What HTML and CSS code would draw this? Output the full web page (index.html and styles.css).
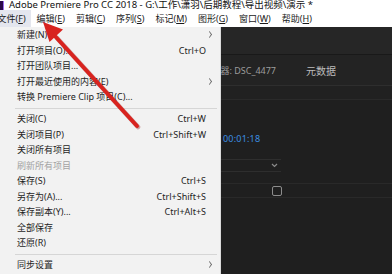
FILE: index.html
```html
<!DOCTYPE html>
<html lang="zh-CN">
<head>
  <meta charset="UTF-8">
  <meta name="viewport" content="width=device-width, initial-scale=1.0">
  <title>Adobe Premiere Pro CC 2018 - 文件菜单</title>
  <link rel="stylesheet" href="styles.css">
</head>
<body>
  <div class="app">
    <!-- Window title -->
    <header class="titlebar">
      <span class="app-icon"></span>
      <span class="title">Adobe Premiere Pro CC 2018 - G:\工作\潇羽\后期教程\导出视频\演示 *</span>
    </header>

    <!-- Menu bar -->
    <nav class="menubar">
      <span class="menu-item active">文件(<u>F</u>)</span>
      <span class="menu-item">编辑(<u>E</u>)</span>
      <span class="menu-item">剪辑(<u>C</u>)</span>
      <span class="menu-item">序列(<u>S</u>)</span>
      <span class="menu-item">标记(<u>M</u>)</span>
      <span class="menu-item">图形(<u>G</u>)</span>
      <span class="menu-item">窗口(<u>W</u>)</span>
      <span class="menu-item">帮助(<u>H</u>)</span>
    </nav>

    <main class="workspace">
      <div class="panel-top"></div>
      <div class="panel-tabs">
        <span class="tab source">源监视器: DSC_4477</span>
        <span class="tab meta">元数据</span>
      </div>
      <div class="panel-strip"></div>
      <div class="panel-body">
        <div class="timecode">00:01:18</div>
        <div class="select-row">
          <div class="select">
            <svg width="7" height="5" viewBox="0 0 7 5"><path d="M1 1l2.5 2.5L6 1" fill="none" stroke="#8a8a8a" stroke-width="1.2"/></svg>
          </div>
        </div>
        <div class="check-row">
          <span class="checkbox"></span>
        </div>
      </div>

      <!-- File menu dropdown -->
      <ul class="dropdown">
        <li class="item"><span>新建(N)</span><span class="sub"></span></li>
        <li class="item"><span>打开项目(O)...</span><span class="key">Ctrl+O</span></li>
        <li class="item"><span>打开团队项目...</span></li>
        <li class="item"><span>打开最近使用的内容(E)</span><span class="sub"></span></li>
        <li class="item"><span>转换 Premiere Clip 项目(C)...</span></li>
        <li class="sep"></li>
        <li class="item"><span>关闭(C)</span><span class="key">Ctrl+W</span></li>
        <li class="item"><span>关闭项目(P)</span><span class="key">Ctrl+Shift+W</span></li>
        <li class="item"><span>关闭所有项目</span></li>
        <li class="item disabled"><span>刷新所有项目</span></li>
        <li class="item"><span>保存(S)</span><span class="key">Ctrl+S</span></li>
        <li class="item"><span>另存为(A)...</span><span class="key">Ctrl+Shift+S</span></li>
        <li class="item"><span>保存副本(Y)...</span><span class="key">Ctrl+Alt+S</span></li>
        <li class="item"><span>全部保存</span></li>
        <li class="item"><span>还原(R)</span></li>
        <li class="sep"></li>
        <li class="item"><span>同步设置</span><span class="sub"></span></li>
      </ul>
    </main>

    <!-- Red annotation arrow -->
    <svg class="annotation" width="392" height="274" viewBox="0 0 392 274">
      <line x1="56" y1="37" x2="137" y2="126" stroke="#8e1512" stroke-width="4.6" stroke-linecap="round" opacity="0.35" transform="translate(1 1)"/>
      <line x1="54" y1="35" x2="137" y2="126" stroke="#d8231f" stroke-width="4" stroke-linecap="round"/>
      <polygon points="43,22 49.5,42 63,29.5" fill="#d8231f"/>
    </svg>
  </div>
</body>
</html>
```

FILE: styles.css
```css
* {
  box-sizing: border-box;
}

body {
  margin: 0;
  font-family: "Noto Sans", "Noto Sans CJK SC", sans-serif;
  font-size: 9px;
  color: #1e1e1e;
  background: #1f1f1f;
  overflow: hidden;
}

.app {
  position: relative;
  width: 392px;
  height: 274px;
  display: flex;
  flex-direction: column;
  overflow: hidden;
}

.titlebar {
  height: 10px;
  background: #fff;
  display: flex;
  align-items: center;
  gap: 5px;
  white-space: nowrap;
}

.app-icon {
  width: 4px;
  height: 9px;
  background: #2a0a4a;
  border-right: 1px solid #9a6cf0;
}

.title {
  font-size: 9.5px;
  color: #111;
  line-height: 10px;
  margin-top: -1px;
}

.menubar {
  height: 17px;
  background: #fff;
  display: flex;
  margin-left: -8px;
}

.menu-item {
  padding: 0 5.5px;
  display: flex;
  align-items: center;
  white-space: nowrap;
  color: #1a1a1a;
}

.menu-item u {
  text-underline-offset: 1px;
}

.menu-item.active {
  background: #e4e6ee;
}

.workspace {
  position: relative;
  flex: 1;
  display: flex;
  flex-direction: column;
  background: #1f1f1f;
}

.panel-top {
  height: 28px;
  background: #262626;
  border-bottom: 1px solid #191919;
}

.panel-tabs {
  height: 31px;
  background: #232323;
  border-bottom: 1px solid #2e2e2e;
  display: flex;
  align-items: center;
  color: #9c9c9c;
  white-space: nowrap;
}

.tab.source {
  width: 276px;
  text-align: right;
}

.tab.meta {
  margin-left: 30px;
  font-size: 10px;
  color: #bdbdbd;
}

.panel-strip {
  height: 14px;
  background: #212121;
  border-bottom: 1px solid #2a2a2a;
}

.panel-body {
  display: flex;
  flex-direction: column;
  padding-left: 223px;
}

.timecode {
  margin-top: 32px;
  color: #3b8fe3;
  font-size: 9px;
  letter-spacing: 0.2px;
}

.select-row {
  margin-top: 14px;
  margin-left: -223px;
  height: 13px;
  display: flex;
}

.select {
  width: 281px;
  height: 13px;
  border-top: 1px solid #2e2e2e;
  border-bottom: 1px solid #2e2e2e;
  display: flex;
  align-items: center;
  justify-content: flex-end;
  padding-right: 3px;
}

.check-row {
  margin-top: 11px;
  margin-left: -223px;
  height: 15px;
  border-top: 1px solid #292929;
  border-bottom: 1px solid #292929;
  display: flex;
  align-items: center;
  padding-left: 272px;
}

.checkbox {
  width: 10px;
  height: 10px;
  border: 1.5px solid #8c8c8c;
  border-radius: 2px;
}

.dropdown {
  position: absolute;
  top: 0;
  left: 0;
  width: 221px;
  height: 100%;
  margin: 0;
  padding: 0;
  list-style: none;
  background: #f2f2f2;
  border-right: 1px solid #dadada;
}

.item {
  height: 15.5px;
  display: flex;
  align-items: center;
  justify-content: space-between;
  padding: 0 14px 0 17px;
  white-space: nowrap;
  color: #1e1e1e;
}

.item.disabled {
  color: #a3a3a3;
}

.key {
  color: #222;
}

.sub {
  width: 5px;
  height: 5px;
  margin-right: -6px;
  border-right: 1px solid #6a6a6a;
  border-top: 1px solid #6a6a6a;
  transform: scale(0.7, 1) rotate(45deg);
}

.sep {
  height: 1px;
  margin: 3px 3px 2.5px 15px;
  background: #d6d6d6;
}

.annotation {
  position: absolute;
  top: 0;
  left: 0;
  pointer-events: none;
}
```
